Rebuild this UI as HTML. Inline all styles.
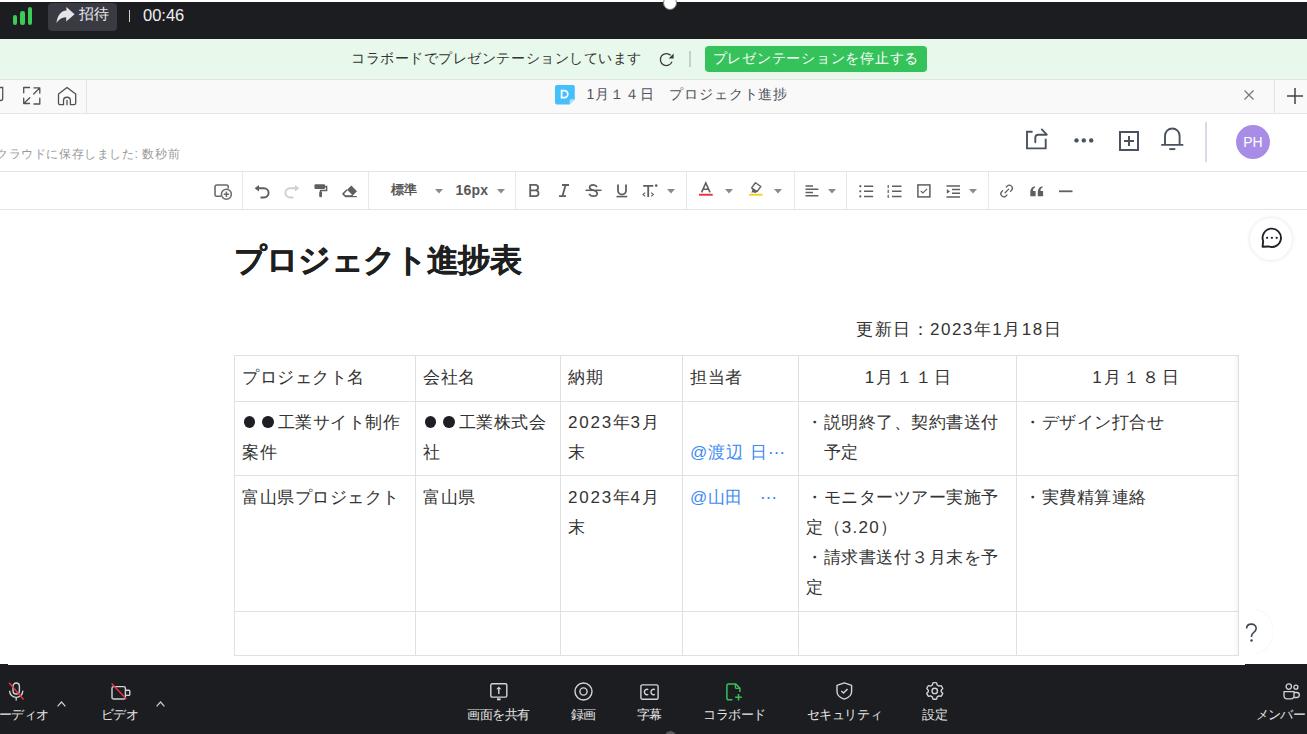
<!DOCTYPE html>
<html lang="ja">
<head>
<meta charset="utf-8">
<style>
*{box-sizing:border-box;margin:0;padding:0}
html,body{width:1307px;height:734px;overflow:hidden;background:#fff}
body{position:relative;font-family:"Liberation Sans",sans-serif;color:#333}
.a{position:absolute}
svg{position:absolute;overflow:visible}
/* top bar */
#top{left:0;top:2px;width:1307px;height:36.5px;background:#1c1d21}
#topwhite{left:0;top:0;width:1307px;height:2px;background:#fff}
/* green bar */
#gbar{left:0;top:38.5px;width:1307px;height:41px;background:#e8f9ec}
/* tab bar */
#tbar{left:0;top:79px;width:1307px;height:35px;background:#f9f9f9;border-top:1px solid #e3e3e3;border-bottom:1px solid #e6e6e6}
/* header */
#hdr{left:0;top:113.5px;width:1307px;height:58px;background:#fff;border-bottom:1px solid #dfe5ee}
/* toolbar */
#tool{left:0;top:171.5px;width:1307px;height:38px;background:#fff;border-bottom:1px solid #dfe5ee}
.sep{position:absolute;width:1px;background:#e6e8ec}
/* bottom */
#bot{left:0;top:665px;width:1307px;height:70px;background:#1c1d21}
.bt{position:absolute;top:706px;font-size:13px;letter-spacing:-0.4px;color:#e6e6e6;white-space:nowrap;line-height:18px}
/* table */
table{position:absolute;left:234px;top:355px;border-collapse:collapse;table-layout:fixed}
.r2 td{padding-top:5.5px;padding-bottom:7.5px}
.n{letter-spacing:1.8px}
td{border:1px solid #e0e0e0;vertical-align:top;padding:7px 0 6px 7px;font-size:17px;letter-spacing:0.5px;line-height:30px;color:#333;white-space:nowrap;overflow:hidden}
.dot{display:inline-block;width:11.5px;height:12px;border-radius:50%;background:#1d1f24;margin:0 7px 0 1.5px;vertical-align:-0.5px}.dot+.dot{margin:0 4px 0 0}
</style>
</head>
<body>
<div class="a" id="topwhite"></div>
<div class="a" id="top"></div>
<!-- top center handle -->
<div class="a" style="left:663px;top:-4px;width:14px;height:14px;border-radius:50%;background:#fff;border:1.5px solid #777"></div>
<!-- signal -->
<div class="a" style="left:13px;top:14.5px;width:4.4px;height:10px;border-radius:2.2px;background:#3ccb57"></div>
<div class="a" style="left:20.4px;top:10.5px;width:4.4px;height:14px;border-radius:2.2px;background:#3ccb57"></div>
<div class="a" style="left:27.8px;top:6.5px;width:4.4px;height:18px;border-radius:2.2px;background:#3ccb57"></div>
<!-- invite button -->
<div class="a" style="left:48px;top:3px;width:69px;height:27.5px;border-radius:4px;background:#393a42"></div>
<svg style="left:56px;top:6px" width="20" height="18" viewBox="0 0 20 18"><path d="M0.5 16.9 C1.2 10 4.8 4.6 10.4 4.4 V1 L18.6 8.2 L10.2 15.4 V11.3 C6.2 11.1 3 13.2 0.5 16.9 Z" fill="#e4e4ea"/></svg>
<div class="a" style="left:79px;top:4px;font-size:15px;line-height:20px;color:#e8e8ee;letter-spacing:-0.3px">招待</div>
<div class="a" style="left:128.5px;top:10px;width:1.6px;height:11.5px;background:#cfcfd4"></div>
<div class="a" style="left:143px;top:4.5px;font-size:16.5px;line-height:20px;color:#f0f0f0">00:46</div>

<!-- green notification bar -->
<div class="a" id="gbar"></div>
<div class="a" style="left:351px;top:48px;font-size:14px;letter-spacing:0.55px;line-height:20px;color:#333;white-space:nowrap">コラボードでプレゼンテーションしています</div>
<svg style="left:659px;top:52px" width="16" height="15" viewBox="0 0 16 15"><path d="M11.6 3.3 A6 6 0 1 0 13 9.6" fill="none" stroke="#3a3a3a" stroke-width="1.3"/><path d="M14.6 1.4 V6.4 H9.6 Z" fill="#3a3a3a"/></svg>
<div class="a" style="left:689px;top:51px;width:1.5px;height:16px;background:#c6cfc8"></div>
<div class="a" style="left:705px;top:46.3px;width:222px;height:25.5px;border-radius:4px;background:#36c25a"></div>
<div class="a" style="left:712.5px;top:47.5px;font-size:14px;letter-spacing:0.75px;line-height:20px;color:#fff;white-space:nowrap">プレゼンテーションを停止する</div>

<!-- tab bar -->
<div class="a" id="tbar"></div>
<div class="sep" style="left:86px;top:80px;height:33px;background:#e4e4e4"></div>
<div class="sep" style="left:1274px;top:80px;height:33px;background:#e4e4e4"></div>
<svg style="left:-4px;top:86px" width="8" height="16" viewBox="0 0 8 16"><path d="M0 1.5 H6.7 V12.5 A2 2 0 0 1 4.7 14.5 H0" fill="none" stroke="#555" stroke-width="1.3"/></svg>
<svg style="left:22px;top:86px" width="20" height="20" viewBox="0 0 20 20"><g fill="none" stroke="#505050" stroke-width="1.3" stroke-linecap="round" stroke-linejoin="round"><path d="M1.7 6.8 V1.5 H7.5 M12 1.9 H17.8 V7.2 M17.8 1.9 L11.7 8 M1.7 12.2 V17.5 H7.5 M1.7 17.5 L7.8 11.8 M17.8 12.2 V18 H12"/></g></svg>
<svg style="left:56px;top:86px" width="22" height="21" viewBox="0 0 22 21"><g fill="none" stroke="#505050" stroke-width="1.3" stroke-linecap="round" stroke-linejoin="round"><path d="M11 1.5 L19.7 8 V17 A1.7 1.7 0 0 1 18 18.7 H14.4 V14.7 A3.45 3.45 0 0 0 7.5 14.7 V18.7 H4.2 A1.7 1.7 0 0 1 2.5 17 V8 Z M11 14.5 V18.7"/></g></svg>
<svg style="left:555px;top:85px" width="20" height="20" viewBox="0 0 20 20"><path d="M1.8 0 H18 A1.8 1.8 0 0 1 19.8 1.8 V14.2 L14.6 19.4 H1.8 A1.8 1.8 0 0 1 0 17.6 V1.8 A1.8 1.8 0 0 1 1.8 0 Z" fill="#45c0fb"/><path d="M14.6 19.4 V16 A1.8 1.8 0 0 1 16.4 14.2 H19.8 Z" fill="#b4e4fd"/><path d="M6.6 5.6 H9.3 A3.3 3.3 0 0 1 9.3 12.6 H6.6 Z" fill="none" stroke="#fff" stroke-width="1.7"/></svg>
<div class="a" style="left:586.5px;top:83px;font-size:14px;letter-spacing:0.85px;line-height:22px;color:#4d525c;white-space:nowrap">1月１４日　プロジェクト進捗</div>
<svg style="left:1244px;top:90px" width="10" height="10" viewBox="0 0 10 10"><path d="M0.5 0.5 L9.5 9.5 M9.5 0.5 L0.5 9.5" stroke="#777" stroke-width="1.2"/></svg>
<svg style="left:1287px;top:88px" width="16" height="16" viewBox="0 0 16 16"><path d="M8 0 V16 M0 8 H16" stroke="#444" stroke-width="1.5"/></svg>

<!-- header -->
<div class="a" id="hdr"></div>
<div class="a" style="left:-4px;top:144.5px;font-size:12px;letter-spacing:0.6px;line-height:18px;color:#9a9a9a;white-space:nowrap">クラウドに保存しました: 数秒前</div>
<svg style="left:1025px;top:128px" width="24" height="22" viewBox="0 0 24 22"><path d="M7.6 3.8 H2 V20.4 H20.7 V10.8" fill="none" stroke="#4a5261" stroke-width="1.9"/><path d="M10.3 14.3 V9.8 A3 3 0 0 1 13.3 6.8 H21.6 M16.8 1.4 L21.8 6.6" fill="none" stroke="#4a5261" stroke-width="1.9" stroke-linecap="round"/></svg>
<svg style="left:1074px;top:137.5px" width="20" height="5" viewBox="0 0 20 5"><circle cx="2.5" cy="2.4" r="2.2" fill="#4a5160"/><circle cx="9.8" cy="2.4" r="2.2" fill="#4a5160"/><circle cx="17.2" cy="2.4" r="2.2" fill="#4a5160"/></svg>
<svg style="left:1118.5px;top:130.5px" width="20" height="20" viewBox="0 0 20 20"><rect x="1" y="1" width="18" height="18" fill="none" stroke="#4a5160" stroke-width="2"/><path d="M10 5 V15 M5 10 H15" stroke="#4a5160" stroke-width="2"/></svg>
<svg style="left:1160px;top:127px" width="24" height="24" viewBox="0 0 24 24"><path d="M5 17.9 V8.8 A7.3 7.3 0 0 1 19.6 8.8 V17.9 M1.2 17.9 H23.3" fill="none" stroke="#4a5261" stroke-width="1.9"/><path d="M9.3 22.1 H15.3" stroke="#4a5261" stroke-width="1.9"/></svg>
<div class="a" style="left:1205px;top:122px;width:2px;height:40px;background:#d6dce7"></div>
<div class="a" style="left:1236px;top:125px;width:34px;height:34px;border-radius:50%;background:#a88de6;color:#fff;font-size:14px;line-height:34px;text-align:center">PH</div>

<!-- toolbar -->
<div class="a" id="tool"></div>
<div class="sep" style="left:242px;top:172px;height:37px"></div>
<div class="sep" style="left:368px;top:172px;height:37px"></div>
<div class="sep" style="left:514.5px;top:172px;height:37px"></div>
<div class="sep" style="left:685.5px;top:172px;height:37px"></div>
<div class="sep" style="left:793.5px;top:172px;height:37px"></div>
<div class="sep" style="left:846px;top:172px;height:37px"></div>
<div class="sep" style="left:987.5px;top:172px;height:37px"></div>

<svg style="left:214px;top:183.5px" width="19" height="16" viewBox="0 0 19 16"><path d="M7 12.3 H2.6 A1.6 1.6 0 0 1 1 10.7 V2.6 A1.6 1.6 0 0 1 2.6 1 H12.6 A1.6 1.6 0 0 1 14.2 2.6 V4.6" fill="none" stroke="#6a6a6a" stroke-width="1.6"/><circle cx="12.4" cy="10.3" r="5" fill="#fff" stroke="#6a6a6a" stroke-width="1.5"/><path d="M12.4 7.6 V13 M9.7 10.3 H15.1" stroke="#6a6a6a" stroke-width="1.5"/></svg>
<svg style="left:253.5px;top:184.5px" width="17" height="14" viewBox="0 0 17 14"><path d="M2.5 3.3 H10 A4.6 4.6 0 0 1 10 12.5 H6.5" fill="none" stroke="#5f5f5f" stroke-width="1.9"/><path d="M0.6 3.3 L5 0 V6.6 Z" fill="#5f5f5f"/></svg>
<svg style="left:282.5px;top:184.5px" width="17" height="14" viewBox="0 0 17 14"><path d="M14.5 3.3 H7 A4.6 4.6 0 0 0 7 12.5 H10.5" fill="none" stroke="#cfcfcf" stroke-width="1.9"/><path d="M16.4 3.3 L12 0 V6.6 Z" fill="#cfcfcf"/></svg>
<svg style="left:313.5px;top:184px" width="14" height="14" viewBox="0 0 14 14"><rect x="0.5" y="0.3" width="10.5" height="4.6" rx="1" fill="#5f5f5f"/><path d="M11 2.6 H12.6 V6.4 H6.6 V8" fill="none" stroke="#5f5f5f" stroke-width="1.5"/><rect x="5.2" y="7.6" width="2.8" height="5.6" rx="1.2" fill="#5f5f5f"/></svg>
<svg style="left:341.5px;top:184.5px" width="16" height="13" viewBox="0 0 16 13"><path d="M9.3 0.6 L15 6.3 L10.8 10.5 L5.1 4.8 Z" fill="#5f5f5f"/><path d="M5.1 4.8 L1 8.9 L3 10.9 H8.4 L10.8 10.5" fill="none" stroke="#5f5f5f" stroke-width="1.5" stroke-linejoin="round"/><path d="M3 11.6 H14.8" stroke="#5f5f5f" stroke-width="1.2"/></svg>
<div class="a" style="left:390.5px;top:181px;font-size:13px;line-height:18px;font-weight:bold;color:#575757">標準</div>
<svg style="left:435px;top:189px" width="8" height="5" viewBox="0 0 8 5"><path d="M0 0 H8 L4 4.5 Z" fill="#8a8a8a"/></svg>
<div class="a" style="left:455.5px;top:180.5px;font-size:14px;line-height:18px;font-weight:bold;color:#575757;letter-spacing:0.2px">16px</div>
<svg style="left:496.5px;top:189px" width="8" height="5" viewBox="0 0 8 5"><path d="M0 0 H8 L4 4.5 Z" fill="#8a8a8a"/></svg>
<svg style="left:529px;top:184px" width="12" height="13" viewBox="0 0 12 13"><path d="M1.2 6.4 H6.3 A2.8 2.8 0 0 0 6.3 0.8 H1.2 V12.2 H6.6 A2.9 2.9 0 0 0 6.6 6.4" fill="none" stroke="#5f5f5f" stroke-width="1.8"/></svg>
<svg style="left:557.5px;top:184px" width="12" height="13" viewBox="0 0 12 13"><path d="M4 1 H11 M1 12.2 H8 M7.6 1 L4.4 12.2" fill="none" stroke="#5f5f5f" stroke-width="1.8"/></svg>
<svg style="left:584.5px;top:184px" width="17" height="13" viewBox="0 0 17 13"><path d="M12 3 C11 1.2 9.6 0.8 8.3 0.8 C6 0.8 4.6 2 4.6 3.5 C4.6 5 6 5.7 8.4 6.3 C10.8 6.9 12.2 7.8 12.2 9.5 C12.2 11.2 10.6 12.2 8.4 12.2 C6.2 12.2 4.8 11.3 4.2 9.8" fill="none" stroke="#5f5f5f" stroke-width="1.7"/><path d="M0.5 6.3 H16.5" stroke="#5f5f5f" stroke-width="1.5"/></svg>
<svg style="left:616px;top:184px" width="12" height="14" viewBox="0 0 12 14"><path d="M2 0.5 V6.5 A4 4 0 0 0 10 6.5 V0.5" fill="none" stroke="#5f5f5f" stroke-width="1.8"/><path d="M0.5 12.6 H11.3" stroke="#5f5f5f" stroke-width="1.6"/></svg>
<svg style="left:641.5px;top:183.5px" width="17" height="14" viewBox="0 0 17 14"><path d="M1.2 1.8 H11.3 M6.2 1.8 V13" fill="none" stroke="#5f5f5f" stroke-width="1.8"/><circle cx="14.2" cy="1.6" r="1.3" fill="#5f5f5f"/><path d="M3.2 8.6 L1 10.5 L3.2 12.4 M9.2 8.6 L11.4 10.5 L9.2 12.4" fill="none" stroke="#5f5f5f" stroke-width="1.1"/></svg>
<svg style="left:666.5px;top:189px" width="8" height="5" viewBox="0 0 8 5"><path d="M0 0 H8 L4 4.5 Z" fill="#8a8a8a"/></svg>
<svg style="left:699px;top:181.5px" width="14" height="14" viewBox="0 0 14 14"><path d="M2.6 10.3 L6.8 0.9 L11 10.3 M4.2 7.2 H9.4" fill="none" stroke="#5f5f5f" stroke-width="1.6"/><rect x="0" y="11.8" width="13.7" height="1.9" fill="#e8313b"/></svg>
<svg style="left:724.5px;top:189px" width="8" height="5" viewBox="0 0 8 5"><path d="M0 0 H8 L4 4.5 Z" fill="#8a8a8a"/></svg>
<svg style="left:748.5px;top:181.5px" width="14" height="14" viewBox="0 0 14 14"><path d="M6.5 0.8 L11.8 4.5 L8 9.6 L2.6 5.9 Z" fill="none" stroke="#5f5f5f" stroke-width="1.4" stroke-linejoin="round"/><path d="M3.6 6.5 L8.2 9.3 L6.7 11.1 L3.6 10.3 L2.5 11.2" fill="#5f5f5f"/><rect x="0.2" y="11.8" width="13.3" height="1.9" fill="#f6d316"/></svg>
<svg style="left:774px;top:189px" width="8" height="5" viewBox="0 0 8 5"><path d="M0 0 H8 L4 4.5 Z" fill="#8a8a8a"/></svg>
<svg style="left:804.5px;top:184px" width="14" height="14" viewBox="0 0 14 14"><path d="M0.5 2 H8 M0.5 5.3 H13.4 M0.5 8.5 H8 M0.5 11.7 H13.4" stroke="#5f5f5f" stroke-width="1.6"/></svg>
<svg style="left:827.5px;top:189px" width="8" height="5" viewBox="0 0 8 5"><path d="M0 0 H8 L4 4.5 Z" fill="#8a8a8a"/></svg>
<svg style="left:858.5px;top:184.5px" width="15" height="13" viewBox="0 0 15 13"><path d="M5 1.2 H14.2 M5 6.3 H14.2 M5 11.4 H14.2" stroke="#5f5f5f" stroke-width="1.5"/><circle cx="1.3" cy="1.2" r="1.1" fill="#5f5f5f"/><circle cx="1.3" cy="6.3" r="1.1" fill="#5f5f5f"/><circle cx="1.3" cy="11.4" r="1.1" fill="#5f5f5f"/></svg>
<svg style="left:887px;top:184.5px" width="15" height="13" viewBox="0 0 15 13"><path d="M5 1.2 H14.5 M5 6.3 H14.5 M5 11.4 H14.5" stroke="#5f5f5f" stroke-width="1.5"/><path d="M1.2 0 V3 M1.2 4.8 V8 M1.2 9.8 V13" stroke="#5f5f5f" stroke-width="1.2"/></svg>
<svg style="left:917px;top:184px" width="14" height="14" viewBox="0 0 14 14"><rect x="0.9" y="0.9" width="12" height="12" fill="none" stroke="#5f5f5f" stroke-width="1.5"/><path d="M3.8 7 L5.9 9 L10 4.8" fill="none" stroke="#5f5f5f" stroke-width="1.1"/></svg>
<svg style="left:945.5px;top:184.5px" width="15" height="13" viewBox="0 0 15 13"><path d="M0.5 0.9 H14 M6 4.6 H14 M6 8.2 H14 M0.5 11.9 H14" stroke="#5f5f5f" stroke-width="1.5"/><path d="M0.8 4 L4 6.4 L0.8 8.8 Z" fill="#5f5f5f"/></svg>
<svg style="left:968.5px;top:189px" width="8" height="5" viewBox="0 0 8 5"><path d="M0 0 H8 L4 4.5 Z" fill="#8a8a8a"/></svg>
<svg style="left:1000px;top:184px" width="14" height="14" viewBox="0 0 14 14"><path d="M6.22 3.14 L7.28 2.08 A3 3 0 0 1 11.52 6.32 L10.46 7.38 M6.98 10.86 L5.92 11.92 A3 3 0 0 1 1.68 7.68 L2.74 6.62 M5.1 8.7 L8.7 5.1" fill="none" stroke="#5f5f5f" stroke-width="1.3" stroke-linecap="round"/></svg>
<svg style="left:1029.5px;top:186px" width="14" height="11" viewBox="0 0 14 11"><path d="M0.3 10.3 V6 C0.3 3 1.8 1 4.8 0.3 L5.2 1.6 C3.6 2.3 3 3.4 3 5 H5.6 V10.3 Z M7.8 10.3 V6 C7.8 3 9.3 1 12.3 0.3 L12.7 1.6 C11.1 2.3 10.5 3.4 10.5 5 H13.1 V10.3 Z" fill="#5f5f5f"/></svg>
<svg style="left:1058.5px;top:189.5px" width="14" height="3" viewBox="0 0 14 3"><path d="M0 1.3 H13.5" stroke="#5f5f5f" stroke-width="1.8"/></svg>


<!-- content -->
<div class="a" style="left:234px;top:238px;font-size:32px;letter-spacing:-0.8px;line-height:44px;font-weight:bold;color:#1f1f1f;-webkit-text-stroke:0.35px #1f1f1f;white-space:nowrap">プロジェクト進捗表</div>
<div class="a" style="left:856px;top:318px;font-size:17px;letter-spacing:1.5px;line-height:24px;color:#333;white-space:nowrap">更新日：2023年1月18日</div>

<table>
<colgroup><col style="width:181px"><col style="width:145px"><col style="width:122px"><col style="width:116px"><col style="width:218px"><col style="width:222px"></colgroup>
<tr style="height:46px"><td>プロジェクト名</td><td>会社名</td><td>納期</td><td>担当者</td><td style="text-align:center;letter-spacing:2.2px;padding-left:3px">1月１１日</td><td style="text-align:center;letter-spacing:2.2px;padding-left:18px">1月１８日</td></tr>
<tr style="height:74px" class="r2"><td><span class="dot"></span><span class="dot"></span>工業サイト制作<br>案件</td><td><span class="dot"></span><span class="dot"></span>工業株式会<br>社</td><td><span class="n">2023</span>年<span class="n">3</span>月<br>末</td><td><br><span style="color:#3d8bf2;letter-spacing:1px">@渡辺 日⋯</span></td><td>・説明終了、契約書送付<br>　予定</td><td>・デザイン打合せ</td></tr>
<tr style="height:136px"><td>富山県プロジェクト</td><td>富山県</td><td><span class="n">2023</span>年<span class="n">4</span>月<br>末</td><td><span style="color:#3d8bf2">@山田　⋯</span></td><td>・モニターツアー実施予<br>定<span style="letter-spacing:1.3px">（3.20）</span><br>・請求書送付３月末を予<br>定</td><td>・実費精算連絡</td></tr>
<tr style="height:44px"><td></td><td></td><td></td><td></td><td></td><td></td></tr>
</table>

<!-- floating buttons -->
<div class="a" style="left:1249.5px;top:218px;width:42px;height:42px;border-radius:50%;background:#fff;box-shadow:0 0 4px rgba(0,0,0,0.12)"></div>
<svg style="left:1260.5px;top:226.5px" width="22" height="22" viewBox="0 0 22 22"><path d="M2.15 13.95 A9.2 9.2 0 1 1 7.65 19.45 L1.6 19.8 Z" fill="none" stroke="#1f2329" stroke-width="1.9" stroke-linejoin="round"/><circle cx="6.1" cy="10.8" r="1.15" fill="#1f2329"/><circle cx="10.9" cy="10.8" r="1.15" fill="#1f2329"/><circle cx="15.7" cy="10.8" r="1.15" fill="#1f2329"/></svg>
<div class="a" style="left:1228px;top:609px;width:45px;height:45px;border-radius:50%;background:#fff;box-shadow:0 0 3px rgba(0,0,0,0.08);clip-path:inset(0 0 0 17px)"></div>
<svg style="left:1244.5px;top:623px" width="14" height="20" viewBox="0 0 14 20"><path d="M1.6 5.6 C1.6 2.8 3.6 1.1 6.4 1.1 C9.2 1.1 11.2 2.9 11.2 5.4 C11.2 7.6 9.9 8.6 8.3 9.8 C7 10.8 6.5 11.6 6.5 13.4 V14" fill="none" stroke="#3e4652" stroke-width="1.6"/><circle cx="6.5" cy="17.4" r="1.25" fill="#3e4652"/></svg>

<!-- bottom bar -->
<div class="a" style="left:1245px;top:664px;width:62px;height:2px;background:#1c1d21"></div>
<div class="a" style="left:0;top:664px;width:8px;height:2px;background:#1c1d21"></div>
<div class="a" style="left:1233px;top:355px;width:5px;height:300px;background:linear-gradient(90deg,rgba(0,0,0,0),rgba(0,0,0,0.035))"></div>
<div class="a" id="bot"></div>

<svg style="left:8px;top:682px" width="17" height="19" viewBox="0 0 17 19"><rect x="5" y="1" width="6.4" height="11" rx="3.2" fill="none" stroke="#d4d4d6" stroke-width="1.4"/><path d="M1.6 8.8 A6.6 6.6 0 0 0 14.8 8.8 M8.2 15.4 V18.5" fill="none" stroke="#d4d4d6" stroke-width="1.4"/><path d="M1 0.8 L15.6 17.5" stroke="#e8364a" stroke-width="1.4"/></svg>
<svg style="left:57px;top:700.5px" width="9" height="6" viewBox="0 0 9 6"><path d="M0.6 5.4 L4.5 1 L8.4 5.4" fill="none" stroke="#d0d0d0" stroke-width="1.2"/></svg>
<svg style="left:110.5px;top:683px" width="20" height="17" viewBox="0 0 20 17"><rect x="1" y="3.6" width="13.4" height="12.4" rx="1.6" fill="none" stroke="#d4d4d6" stroke-width="1.4"/><path d="M14.4 7.2 H17.8 A1 1 0 0 1 18.8 8.2 V11.4 A1 1 0 0 1 17.8 12.4 H14.4" fill="none" stroke="#d4d4d6" stroke-width="1.4"/><path d="M0.6 0.6 L15.4 16" stroke="#e8364a" stroke-width="1.4"/></svg>
<svg style="left:156px;top:700.5px" width="9" height="6" viewBox="0 0 9 6"><path d="M0.6 5.4 L4.5 1 L8.4 5.4" fill="none" stroke="#d0d0d0" stroke-width="1.2"/></svg>
<svg style="left:490px;top:683px" width="18" height="18" viewBox="0 0 18 18"><rect x="0.8" y="0.8" width="16" height="13.3" rx="1.3" fill="none" stroke="#d4d4d6" stroke-width="1.4"/><path d="M8.8 11 V5.5" stroke="#d4d4d6" stroke-width="1.4"/><path d="M8.8 3.6 L11.3 6.3 H6.3 Z" fill="#d4d4d6"/><rect x="7" y="15.3" width="3.6" height="2" fill="#d4d4d6"/></svg>
<svg style="left:574px;top:682px" width="19" height="19" viewBox="0 0 19 19"><circle cx="9.5" cy="9.5" r="8.5" fill="none" stroke="#d4d4d6" stroke-width="1.4"/><circle cx="9.5" cy="9.5" r="3.6" fill="none" stroke="#d4d4d6" stroke-width="1.4"/></svg>
<svg style="left:640px;top:683.5px" width="19" height="16" viewBox="0 0 19 16"><rect x="0.9" y="0.9" width="17.2" height="14.3" rx="1.5" fill="none" stroke="#d4d4d6" stroke-width="1.4"/><path d="M8.3 5.6 A2.7 2.7 0 1 0 8.3 10.4 M14.9 5.6 A2.7 2.7 0 1 0 14.9 10.4" fill="none" stroke="#d4d4d6" stroke-width="1.4"/></svg>
<svg style="left:726px;top:682.5px" width="17" height="18" viewBox="0 0 17 18"><path d="M6.5 16.8 H2.4 A1.5 1.5 0 0 1 0.9 15.3 V2.4 A1.5 1.5 0 0 1 2.4 0.9 H9.6 L13.9 5.2 V9" fill="none" stroke="#34c257" stroke-width="1.5" stroke-linejoin="round"/><path d="M9.4 1 V4.2 A1.2 1.2 0 0 0 10.6 5.4 H13.8" fill="none" stroke="#34c257" stroke-width="1.3"/><path d="M12.5 11 V17.6 M9.2 14.3 H15.8" stroke="#34c257" stroke-width="1.5"/></svg>
<svg style="left:835.5px;top:682px" width="17" height="18" viewBox="0 0 17 18"><path d="M8.3 0.9 L15.6 3.4 V9.4 C15.6 13 12.8 15.6 8.3 17.1 C3.8 15.6 1 13 1 9.4 V3.4 Z" fill="none" stroke="#d4d4d6" stroke-width="1.4" stroke-linejoin="round"/><path d="M5.3 9 L7.5 11.1 L11.5 7" fill="none" stroke="#d4d4d6" stroke-width="1.4"/></svg>
<svg style="left:925.5px;top:682px" width="18" height="18" viewBox="0 0.3 18.5 18.5"><path d="M7.3 1 H10.7 L11.4 3.4 L13.5 4.6 L15.9 4 L17.6 7 L15.9 8.8 V11.2 L17.6 13 L15.9 16 L13.5 15.4 L11.4 16.6 L10.7 19 H7.3" transform="translate(0,-0.5)" fill="none" stroke="none"/><path d="M9 0.9 C9.7 0.9 10.3 1 10.9 1.2 L11.5 3.4 C12.2 3.7 12.8 4.1 13.3 4.5 L15.5 4 C16.3 4.9 16.9 6 17.2 7.1 L15.6 8.7 C15.7 9.3 15.7 9.7 15.6 10.3 L17.2 11.9 C16.9 13 16.3 14.1 15.5 15 L13.3 14.5 C12.8 14.9 12.2 15.3 11.5 15.6 L10.9 17.8 C9.7 18.1 8.3 18.1 7.1 17.8 L6.5 15.6 C5.8 15.3 5.2 14.9 4.7 14.5 L2.5 15 C1.7 14.1 1.1 13 0.8 11.9 L2.4 10.3 C2.3 9.7 2.3 9.3 2.4 8.7 L0.8 7.1 C1.1 6 1.7 4.9 2.5 4 L4.7 4.5 C5.2 4.1 5.8 3.7 6.5 3.4 L7.1 1.2 C7.7 1 8.3 0.9 9 0.9 Z" fill="none" stroke="#d4d4d6" stroke-width="1.4" stroke-linejoin="round"/><circle cx="9" cy="9.5" r="2.8" fill="none" stroke="#d4d4d6" stroke-width="1.4"/></svg>
<svg style="left:1283px;top:683px" width="18" height="17" viewBox="0 0 18 17"><circle cx="5.8" cy="3.6" r="2.7" fill="none" stroke="#d4d4d6" stroke-width="1.3"/><circle cx="12.9" cy="4.2" r="2" fill="none" stroke="#d4d4d6" stroke-width="1.3"/><path d="M1 8.6 H11 V13 A2.8 2.8 0 0 1 8.2 15.8 H3.8 A2.8 2.8 0 0 1 1 13 Z" fill="none" stroke="#d4d4d6" stroke-width="1.3" stroke-linejoin="round"/><path d="M11 9.5 H13.8 A2.5 2.5 0 0 1 13.8 14.5 H11" fill="none" stroke="#d4d4d6" stroke-width="1.3"/></svg>
<div class="bt" style="left:-14px">オーディオ</div>
<div class="bt" style="left:100.5px">ビデオ</div>
<div class="bt" style="left:467px">画面を共有</div>
<div class="bt" style="left:570.5px">録画</div>
<div class="bt" style="left:636.5px">字幕</div>
<div class="bt" style="left:703px">コラボード</div>
<div class="bt" style="left:806.5px">セキュリティ</div>
<div class="bt" style="left:922px">設定</div>
<div class="bt" style="left:1256px;letter-spacing:-0.8px">メンバー</div>
<div class="a" style="left:664.5px;top:731px;width:11px;height:11px;border-radius:50%;background:#58595e"></div>

</body>
</html>
